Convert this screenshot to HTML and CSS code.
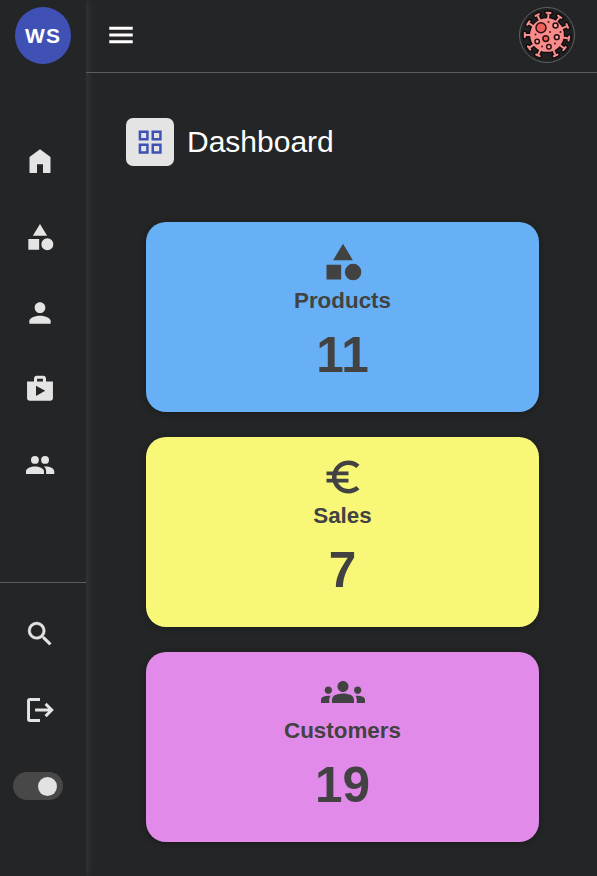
FILE: index.html
```html
<!DOCTYPE html>
<html lang="en">
<head>
<meta charset="utf-8">
<title>Dashboard</title>
<link rel="stylesheet" href="styles.css">
</head>
<body>
<div class="app">
  <aside class="sidebar">
    <div class="logo">WS</div>
    <nav class="nav">
      <a class="nav-item"><svg class="icon" viewBox="0 -960 960 960"><path d="M165-120v-480l315-230 315 230v480H570v-260H390v260H165Z"/></svg></a>
      <a class="nav-item"><svg class="icon" viewBox="0 -960 960 960"><path d="m265-520 215-350 215 350H265ZM700-80q-75 0-127.500-52.500T520-260q0-75 52.500-127.500T700-440q75 0 127.500 52.500T880-260q0 75-52.500 127.500T700-80Zm-570-20v-320h325v320H130Z"/></svg></a>
      <a class="nav-item"><svg class="icon" viewBox="0 0 24 24"><path d="M12 12c2.210 0 4-1.790 4-4s-1.790-4-4-4-4 1.790-4 4 1.790 4 4 4zm0 2c-2.670 0-8 1.340-8 4v2h16v-2c0-2.660-5.330-4-8-4z"/></svg></a>
      <a class="nav-item"><svg class="icon" viewBox="0 0 24 24"><path fill-rule="evenodd" d="M16.500 6.300V4c0-1.110-.89-2-2-2h-5c-1.110 0-2 .89-2 2v2.300H2.300V19c0 1.110.89 1.800 2 1.800h15.400c1.110 0 2-.69 2-1.800V6.300h-5.200zm-6.700-1.900h4.400v1.900H9.800V4.400zM9 17.300V9.500l6.900 3.900-6.900 3.900z"/></svg></a>
      <a class="nav-item"><svg class="icon" viewBox="0 0 24 24"><circle cx="8.200" cy="8.200" r="2.950"/><circle cx="15.800" cy="8.200" r="2.950"/><path d="M1.500 18.700v-1.900c0-2.500 3.700-3.700 6.700-3.700s6.800 1.200 6.800 3.700v1.900zM14.800 13.100c4.300-.3 7.900 1.200 7.900 3.700v1.900h-6.100v-1.900c0-1.700-.6-2.800-1.800-3.700z"/></svg></a>
    </nav>
    <div class="tools">
      <a class="nav-item"><svg class="icon search" viewBox="0 0 24 24"><path d="M15.500 14h-.79l-.28-.27A6.471 6.471 0 0 0 16 9.500 6.500 6.500 0 1 0 9.500 16c1.610 0 3.090-.59 4.230-1.570l.27.28v.79l5 4.990L20.490 19l-4.990-5zm-6 0C7.010 14 5 11.990 5 9.500S7.010 5 9.500 5 14 7.010 14 9.500 11.990 14 9.500 14z"/></svg></a>
      <a class="nav-item"><svg class="icon logout" viewBox="0 0 24 24"><path d="M12 4.150H4.400a1 1 0 0 0-1 1v13.700a1 1 0 0 0 1 1H12M8.300 12H20.700M16.200 7.400l4.600 4.600-4.600 4.600"/></svg></a>
      <div class="nav-item"><span class="toggle"><span class="knob"></span></span></div>
    </div>
  </aside>
  <div class="main">
    <header class="topbar">
      <svg class="icon menu" viewBox="0 0 24 24"><path d="M3.200 18.150h17.600v-2.200H3.200v2.200zm0-5.050h17.600v-2.200H3.200v2.200zm0-7.250v2.200h17.600v-2.200H3.200z"/></svg>
      <svg class="avatar" viewBox="-28 -28 56 56">
        <defs>
          <g id="spike"><path d="M0-15V-22M-2-22.200H2"/></g>
          <g id="spikes">
            <use href="#spike" transform="rotate(4)"/><use href="#spike" transform="rotate(35)"/><use href="#spike" transform="rotate(66)"/><use href="#spike" transform="rotate(99)"/><use href="#spike" transform="rotate(128)"/><use href="#spike" transform="rotate(157)"/><use href="#spike" transform="rotate(204)"/><use href="#spike" transform="rotate(234)"/><use href="#spike" transform="rotate(270)"/><use href="#spike" transform="rotate(303)"/><use href="#spike" transform="rotate(334)"/>
          </g>
        </defs>
        <circle class="ring" r="27.500"/>
        <use class="spike-edge" href="#spikes"/>
        <circle class="cell" r="17.600"/>
        <use class="spike-fill" href="#spikes"/>
        <g class="spots">
          <circle class="hot" cx="-6" cy="-7.200" r="5"/>
          <circle cx="8.500" cy="-9.500" r="2.500"/>
          <circle class="hot" cx="-1.200" cy="3.600" r="2.900"/>
          <circle cx="9.800" cy="2.200" r="2.400"/>
          <circle cx="-9.800" cy="6.500" r="2.200"/>
          <circle cx="1.900" cy="11.800" r="2.300"/>
        </g>
        <g class="dots"><circle cx="1.500" cy="-13" r="1"/><circle cx="3" cy="-3" r="1"/><circle cx="-11.500" cy="-.5" r="1"/><circle cx="8" cy="8.500" r="1"/><circle cx="-5" cy="11.500" r="1"/><circle cx="13.500" cy="-3" r="1"/></g>
      </svg>
    </header>
    <main class="content">
      <div class="heading">
        <span class="tile"><svg class="icon" viewBox="0 -960 960 960"><path fill-rule="evenodd" d="M140-525v-300h300v300H140Zm0 395v-305h300v305H140Zm385-395v-300h305v300H525Zm0 395v-305h305v305H525ZM215-600h150v-150H215v150Zm385 0h155v-150H600v150Zm0 395h155v-155H600v155Zm-385 0h150v-155H215v155Z"/></svg></span>
        <h1 class="title">Dashboard</h1>
      </div>
      <div class="cards">
        <section class="card products">
          <svg class="card-icon" viewBox="0 -960 960 960"><path d="m265-520 215-360 215 360H265ZM700-80q-75 0-127.500-52.500T520-260q0-75 52.500-127.500T700-440q75 0 127.500 52.500T880-260q0 75-52.500 127.500T700-80Zm-580-20v-320h320v320H120Z"/></svg>
          <h2 class="label">Products</h2>
          <p class="value">11</p>
        </section>
        <section class="card sales">
          <svg class="card-icon" viewBox="0 0 24 24"><path d="M15 18.500c-2.510 0-4.680-1.420-5.760-3.500H15v-2H8.580c-.05-.33-.08-.66-.08-1s.03-.67.08-1H15V9H9.240C10.320 6.920 12.500 5.500 15 5.500c1.610 0 3.090.59 4.230 1.570L21 5.300C19.410 3.870 17.300 3 15 3c-3.920 0-7.240 2.510-8.480 6H3v2h3.060c-.04.33-.06.66-.06 1s.02.67.06 1H3v2h3.520c1.240 3.490 4.560 6 8.480 6 2.310 0 4.410-.87 6-2.300l-1.780-1.770c-1.130.98-2.600 1.570-4.220 1.570z"/></svg>
          <h2 class="label">Sales</h2>
          <p class="value">7</p>
        </section>
        <section class="card customers">
          <svg class="card-icon" viewBox="0 0 24 24"><path d="M4 13c1.100 0 2-.9 2-2s-.9-2-2-2-2 .9-2 2 .9 2 2 2zm1.130 1.100c-.37-.06-.74-.1-1.130-.1-.99 0-1.930.21-2.780.58C.48 14.900 0 15.620 0 16.430V18h4.500v-1.610c0-.83.23-1.610.63-2.290zM20 13c1.100 0 2-.9 2-2s-.9-2-2-2-2 .9-2 2 .9 2 2 2zm4 3.430c0-.81-.48-1.530-1.220-1.850-.85-.37-1.790-.58-2.780-.58-.39 0-.76.04-1.130.1.4.68.63 1.460.63 2.290V18H24v-1.570zM16.240 13.650c-1.170-.52-2.610-.9-4.240-.9s-3.070.39-4.240.9C6.680 14.130 6 15.210 6 16.390V18h12v-1.610c0-1.180-.68-2.260-1.760-2.740zM9 9c0 1.660 1.340 3 3 3s3-1.340 3-3-1.340-3-3-3-3 1.340-3 3z"/></svg>
          <h2 class="label">Customers</h2>
          <p class="value">19</p>
        </section>
      </div>
    </main>
  </div>
</div>
</body>
</html>
```
FILE: styles.css
```css
* {
  box-sizing: border-box;
  margin: 0;
  padding: 0;
}

body {
  background: #242526;
  font-family: "Liberation Sans", Arial, sans-serif;
  color: #fff;
}

.app {
  display: flex;
  height: 876px;
  overflow: hidden;
}

.sidebar {
  display: flex;
  flex-direction: column;
  flex: 0 0 86px;
  background: #242526;
  box-shadow: 0 0 10px rgba(255, 255, 255, 0.13);
}

.logo {
  display: flex;
  align-items: center;
  justify-content: center;
  width: 56px;
  height: 57px;
  margin: 7px 0 0 15px;
  border-radius: 50%;
  background: #3f51b5;
  font-size: 21px;
  font-weight: 700;
  letter-spacing: 1px;
}

.nav {
  padding-top: 59px;
  height: 518px;
}

.tools {
  padding-top: 13px;
  border-top: 1px solid #5c5c5d;
}

.nav-item {
  display: flex;
  align-items: center;
  justify-content: center;
  width: 80px;
  height: 76px;
}

.icon {
  display: block;
  width: 32px;
  height: 32px;
  fill: #e4e4e4;
}

.search {
  stroke: #e4e4e4;
  stroke-width: 0.3;
}

.logout {
  fill: none;
  stroke: #e4e4e4;
  stroke-width: 2.2;
}

.toggle {
  display: flex;
  align-items: center;
  justify-content: flex-end;
  width: 50px;
  height: 28px;
  margin-right: 4px;
  padding-right: 6px;
  border-radius: 14px;
  background: #484848;
}

.knob {
  width: 19px;
  height: 19px;
  border-radius: 50%;
  background: #e2e2e2;
}

.main {
  flex: 1;
}

.topbar {
  display: flex;
  align-items: center;
  justify-content: space-between;
  height: 73px;
  padding: 0 22px 2px 19px;
  border-bottom: 1px solid #5c5c5d;
}

.menu {
  fill: #fff;
}

.avatar {
  width: 56px;
  height: 56px;
}

.ring {
  fill: #202122;
  stroke: #626263;
}

.spike-edge {
  fill: none;
  stroke: #160c0d;
  stroke-width: 5;
  stroke-linecap: round;
}

.spike-fill {
  fill: none;
  stroke: #f59090;
  stroke-width: 2;
  stroke-linecap: round;
}

.cell {
  fill: #f98b8b;
  stroke: #160c0d;
  stroke-width: 1.5;
}

.spots {
  fill: #f8a0a0;
  stroke: #2a1011;
  stroke-width: 1.5;
}

.hot {
  fill: #ee5f5c;
}

.dots {
  fill: #4b1719;
}

.content {
  padding: 45px 58px 0 40px;
}

.heading {
  display: flex;
  align-items: center;
  gap: 13px;
}

.tile {
  display: flex;
  align-items: center;
  justify-content: center;
  width: 48px;
  height: 48px;
  border-radius: 7px;
  background: #e4e4e4;
}

.tile .icon {
  fill: #3f51b5;
}

.title {
  font-size: 30px;
  font-weight: 400;
  line-height: 48px;
}

.cards {
  display: flex;
  flex-direction: column;
  gap: 25px;
  padding: 56px 0 0 20px;
}

.card {
  display: flex;
  flex-direction: column;
  align-items: center;
  height: 190px;
  padding-top: 18px;
  border-radius: 20px;
  color: #424242;
  box-shadow: 0 1px 7px rgba(0, 0, 0, 0.3);
}

.products {
  background: #67b0f5;
}

.sales {
  background: #f8f778;
}

.customers {
  background: #e28ae9;
}

.card-icon {
  width: 44px;
  height: 44px;
  fill: #424242;
}

.label {
  padding-top: 1px;
  font-size: 22.4px;
  line-height: 32px;
}

.value {
  margin-top: 8px;
  font-size: 49.5px;
  font-weight: 700;
  line-height: 60px;
}
```
